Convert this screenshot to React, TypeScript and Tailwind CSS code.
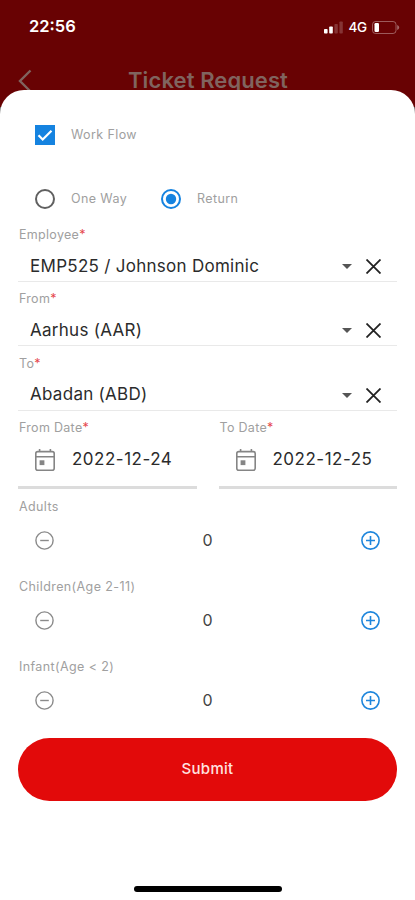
import React from 'react';

const Required = () => <span className="text-[#e5484d]">*</span>;

const StatusBar = () => (
  <div className="flex h-[52px] items-center justify-between pl-[29px] pr-[15px] text-white">
    <span className="text-[16.5px] font-semibold">22:56</span>
    <div className="flex items-center gap-[5px] pt-[2px]">
      <svg width="19" height="13" viewBox="0 0 19 13" fill="currentColor">
        <rect x="0" y="8" width="3.6" height="4.5" rx="0.8" />
        <rect x="5.2" y="5.5" width="3.6" height="7" rx="0.8" />
        <rect x="10.4" y="3" width="3.4" height="9.5" rx="0.8" opacity="0.2" />
        <rect x="15.4" y="0.5" width="3.4" height="12" rx="0.8" opacity="0.2" />
      </svg>
      <span className="text-[13.5px] font-medium tracking-[-0.2px]">4G</span>
      <svg width="28" height="13" viewBox="0 0 28 13" fill="none">
        <rect x="0.5" y="0.5" width="23.5" height="12" rx="3" stroke="#fff" strokeOpacity="0.35" />
        <rect x="2.5" y="2" width="4.5" height="9" rx="1.2" fill="#fff" />
        <path d="M25.2 4v5c1.2-.4 2-1.4 2-2.5s-.8-2.100-2-2.500Z" fill="#fff" fillOpacity="0.4" />
      </svg>
    </div>
  </div>
);

const Radio = ({ checked, label }: { checked?: boolean; label: string }) => (
  <div className="flex items-center gap-[16px]">
    <svg width="20" height="20" viewBox="0 0 20 20" fill="none" className={checked ? 'text-[#1583e0]' : 'text-[#606060]'}>
      <circle cx="10" cy="10" r="9" stroke="currentColor" strokeWidth="2" />
      {checked && <circle cx="10" cy="10" r="5.2" fill="currentColor" />}
    </svg>
    <span className="text-[12.5px] tracking-[0.4px] text-[#a0a0a0]">{label}</span>
  </div>
);

const SelectField = ({ label, value }: { label: string; value: string }) => (
  <div className="mb-[8.3px]">
    <div className="h-4 pl-px text-[12.5px] leading-[17px] tracking-[0.3px] text-[#a0a0a0]">
      {label}
      <Required />
    </div>
    <div className="mt-2 flex h-8 items-center border-b border-[#e9e9e9] pl-[12px] pr-[16px] pt-[2px]">
      <span className="flex-1 text-[17px] tracking-[0.28px] text-[#2b2b2b]">{value}</span>
      <svg width="10" height="5" viewBox="0 0 10 5" fill="#555" className="mr-[14px]">
        <path d="M0 0h10L5 5Z" />
      </svg>
      <svg width="15" height="15" viewBox="0 0 15 15" stroke="#222" strokeWidth="1.8">
        <path d="M.5.5l14 14M14.5.5l-14 14" />
      </svg>
    </div>
  </div>
);

const DateField = ({ label, value }: { label: string; value: string }) => (
  <div className="flex-1">
    <div className="h-4 pl-px text-[12.5px] leading-[17px] tracking-[0.3px] text-[#a0a0a0]">
      {label}
      <Required />
    </div>
    <div className="flex h-[54px] items-center border-b-[3px] border-[#dcdcdc] pl-[17px]">
      <svg width="20" height="22" viewBox="0 0 20 22" fill="none" stroke="#858585" strokeWidth="1.6">
        <rect x="0.8" y="2.6" width="18.4" height="18.6" rx="2" />
        <path d="M1 7.8h18M4.6 0v3M15.4 0v3" />
        <rect x="4.6" y="11.3" width="4.8" height="4.8" fill="#858585" stroke="none" />
      </svg>
      <span className="ml-[17px] pb-[2px] text-[17px] tracking-[0.5px] text-[#2b2b2b]">{value}</span>
    </div>
  </div>
);

const Counter = ({ label }: { label: string }) => (
  <div className="mb-3">
    <div className="h-4 pl-px text-[12.5px] leading-[17px] tracking-[0.4px] text-[#a0a0a0]">{label}</div>
    <div className="flex h-[52px] items-center justify-between px-[17px] pt-px">
      <svg width="19" height="19" viewBox="0 0 19 19" fill="none" stroke="#8a8a8a" strokeWidth="1.4">
        <circle cx="9.5" cy="9.5" r="8.6" />
        <path d="M5.2 9.500h8.600" />
      </svg>
      <span className="text-[16px] text-[#444]">0</span>
      <svg width="19" height="19" viewBox="0 0 19 19" fill="none" stroke="#1e86dc" strokeWidth="1.6">
        <circle cx="9.5" cy="9.5" r="8.6" />
        <path d="M5 9.500h9M9.500 5v9" />
      </svg>
    </div>
  </div>
);

const App: React.FC = () => {
  return (
    <div className="flex h-[900px] w-[415px] flex-col overflow-hidden bg-[linear-gradient(#680203_107px,#666_107px)] font-['Inter','Liberation_Sans',sans-serif]">
      <StatusBar />
      <div className="flex h-[38px] items-start pl-[18px]">
        <svg width="14" height="24" viewBox="0 0 14 24" fill="none" stroke="#80645f" strokeWidth="2.4" className="mt-[17px]">
          <path d="M12.5 1.500 2 12l10.500 10.500" />
        </svg>
        <h1 className="ml-[96px] mt-[13px] text-[22px] font-semibold leading-[30px] tracking-[0.1px] text-[#80645f]">Ticket Request</h1>
      </div>

      {/* Form sheet */}
      <div className="relative flex flex-1 flex-col rounded-t-[24px] bg-white px-[18px]">
        <div className="mt-[35px] flex h-5 items-center gap-[16px] pl-[17px]">
          <svg width="20" height="20" viewBox="0 0 20 20" fill="none">
            <rect width="20" height="20" fill="#1583e0" />
            <path d="m3.500 10.300 4.200 4.200L16.500 5.700" stroke="#fff" strokeWidth="2.2" />
          </svg>
          <span className="text-[12.5px] tracking-[0.4px] text-[#a0a0a0]">Work Flow</span>
        </div>

        <div className="mb-[17px] mt-[44px] flex h-5 items-center gap-[34px] pl-[17px]">
          <Radio label="One Way" />
          <Radio label="Return" checked />
        </div>

        <SelectField label="Employee" value="EMP525 / Johnson Dominic" />
        <SelectField label="From" value="Aarhus (AAR)" />
        <SelectField label="To" value="Abadan (ABD)" />

        <div className="mb-[9px] flex gap-[22px]">
          <DateField label="From Date" value="2022-12-24" />
          <DateField label="To Date" value="2022-12-25" />
        </div>

        <Counter label="Adults" />
        <Counter label="Children(Age 2-11)" />
        <Counter label="Infant(Age < 2)" />

        <button className="h-[63px] shrink-0 rounded-full bg-[#e20a0a] text-[15px] font-medium tracking-[0.3px] text-[#ffe3e0]">
          Submit
        </button>

        <div className="mb-[8px] mt-auto h-[6px] w-[148px] self-center rounded-full bg-black" />
      </div>
    </div>
  );
};

export default App;
